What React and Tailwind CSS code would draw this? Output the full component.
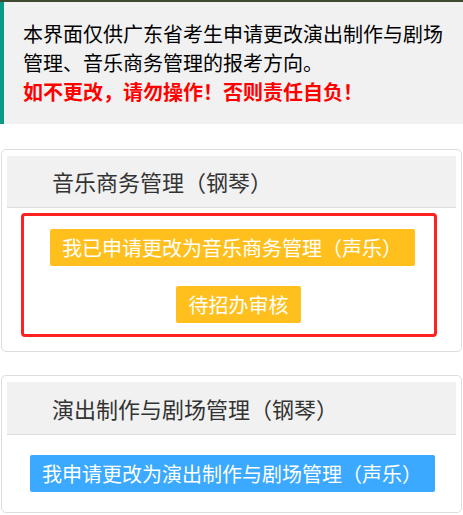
export default function App() {
  const font = { fontFamily: '"Microsoft YaHei", "Noto Sans CJK SC", "Noto Sans", sans-serif' };

  return (
    <div className="w-[463px] min-h-[515px] bg-white overflow-hidden" style={font}>
      {/* top banner edge */}
      <div className="h-[2px] bg-[#3d4b2e]"></div>

      {/* notice */}
      <div className="bg-[#f1f1f1] border-l-4 border-[#0b9a86] pl-[19px] pr-2 pt-[17px] pb-[18px] text-[20px] leading-[29px] text-black">
        <p>本界面仅供广东省考生申请更改演出制作与剧场管理、音乐商务管理的报考方向。</p>
        <p className="text-[#ff0000] font-bold">如不更改，请勿操作！否则责任自负！</p>
      </div>

      {/* card 1 */}
      <div className="mt-[25px] ml-[1px] w-[461px] border border-[#dddddd] rounded-[5px] px-[5px] pt-[6px] pb-[14px]">
        <div className="h-[52px] bg-[#f1f1f1] border-b border-[#dddddd] flex items-center pl-[45px] text-[22px] text-[#333333]">
          音乐商务管理（钢琴）
        </div>
        <div className="mt-[5px] ml-[14px] w-[416px] border-[3px] border-[#ff2020] rounded-[4px] pt-[13px] pb-[11px] flex flex-col items-start">
          <button className="ml-[26px] w-[365px] h-[37px] bg-[#ffc01e] rounded-[2px] text-white text-[20px] text-left pl-[12px] whitespace-nowrap">
            我已申请更改为音乐商务管理（声乐）
          </button>
          <button className="mt-[20px] ml-[152px] w-[125px] h-[37px] bg-[#ffc01e] rounded-[2px] text-white text-[20px] text-center whitespace-nowrap">
            待招办审核
          </button>
        </div>
      </div>

      {/* card 2 */}
      <div className="mt-[23px] ml-[1px] w-[461px] border border-[#dddddd] rounded-[5px] px-[5px] pt-[6px] pb-[20px]">
        <div className="h-[53px] bg-[#f1f1f1] border-b border-[#dddddd] flex items-center pl-[45px] text-[22px] text-[#333333]">
          演出制作与剧场管理（钢琴）
        </div>
        <div className="pt-[20px] pl-[23px]">
          <button className="w-[405px] h-[37px] bg-[#3aa9ff] rounded-[2px] text-white text-[20px] text-left pl-[12px] whitespace-nowrap">
            我申请更改为演出制作与剧场管理（声乐）
          </button>
        </div>
      </div>
    </div>
  );
}
